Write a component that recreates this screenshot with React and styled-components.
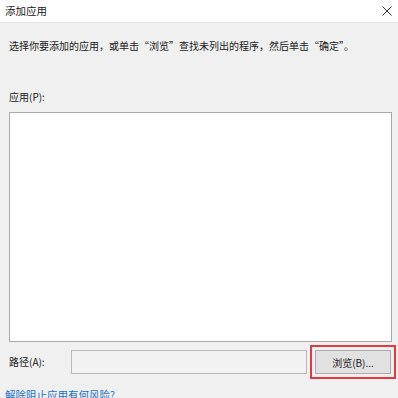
import React from "react";
import styled, { createGlobalStyle } from "styled-components";

const GlobalStyle = createGlobalStyle`
  html, body {
    margin: 0;
    padding: 0;
    background: #f0f0f0;
    overflow: hidden;
  }
  body {
    font-family: "Noto Sans CJK SC", "Noto Sans", sans-serif;
  }
`;

const Dialog = styled.div`
  width: 398px;
  height: 398px;
  background: #f0f0f0;
  display: flex;
  flex-direction: column;
  overflow: hidden;
`;

const TitleBar = styled.div`
  height: 22px;
  background: #ffffff;
  border-bottom: 1px solid #e6e6e6;
  display: flex;
  align-items: center;
  justify-content: space-between;
  padding: 0 5px 0 5px;
  flex-shrink: 0;
`;

const Title = styled.span`
  font-size: 10.5px;
  color: #1a1a1a;
  line-height: 1;
`;

const Close = styled.svg`
  width: 10px;
  height: 10px;
  margin-right: 1px;
`;

const Body = styled.div`
  display: flex;
  flex-direction: column;
  padding: 16px 0 0 9px;
`;

const Text = styled.div`
  font-size: 10px;
  line-height: 14px;
  color: #1a1a1a;
  white-space: nowrap;
`;

const Label = styled(Text)`
  margin-top: ${(p) => p.$top || 0}px;
`;

const ListBox = styled.div`
  margin-top: 8px;
  height: 228px;
  width: 381px;
  background: #ffffff;
  border: 1px solid #a9a9a9;
`;

const PathRow = styled.div`
  display: flex;
  align-items: center;
  margin-top: 3px;
`;

const PathLabel = styled(Text)`
  width: 62px;
  flex-shrink: 0;
`;

const PathInput = styled.div`
  width: 234px;
  height: 22px;
  background: #f2f2f2;
  border: 1px solid #b9b9b9;
  flex-shrink: 0;
`;

const Highlight = styled.div`
  margin-left: 3px;
  padding: 3px;
  border: 2px solid #e03a45;
  display: flex;
  flex-shrink: 0;
`;

const Button = styled.div`
  width: 74px;
  height: 22px;
  background: #e1e1e1;
  border: 1px solid #adadad;
  display: flex;
  align-items: center;
  justify-content: center;
  font-size: 10px;
  color: #1a1a1a;
`;

const HelpLink = styled.a`
  margin-top: 9px;
  margin-left: -4px;
  font-size: 10.5px;
  line-height: 14px;
  color: #1c6fc6;
  text-decoration: none;
  white-space: nowrap;
`;

export default function App() {
  return (
    <>
      <GlobalStyle />
      <Dialog>
        <TitleBar>
          <Title>添加应用</Title>
          <Close viewBox="0 0 10 10">
            <path d="M0.5 0.5 L9.5 9.5 M9.5 0.5 L0.5 9.5" stroke="#333" strokeWidth="1" fill="none" />
          </Close>
        </TitleBar>
        <Body>
          <Text>选择你要添加的应用，或单击“浏览”查找未列出的程序，然后单击“确定”。</Text>
          <Label $top={37}>应用(P):</Label>
          <ListBox />
          <PathRow>
            <PathLabel>路径(A):</PathLabel>
            <PathInput />
            <Highlight>
              <Button>浏览(B)...</Button>
            </Highlight>
          </PathRow>
          <HelpLink href="#">解除阻止应用有何风险?</HelpLink>
        </Body>
      </Dialog>
    </>
  );
}
